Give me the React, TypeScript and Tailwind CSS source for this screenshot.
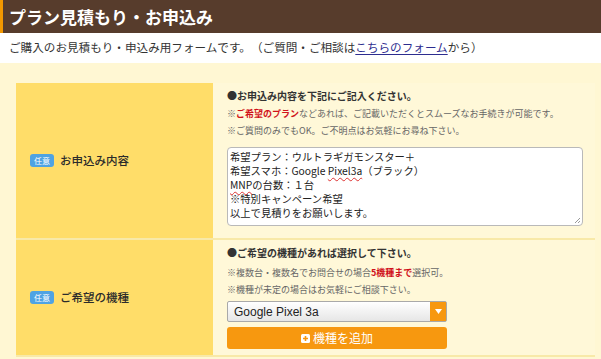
import { FC } from "react";

const jp = "font-['Noto_Sans_CJK_JP','Noto_Sans',sans-serif]";

const Badge: FC = () => (
	<span className="inline-flex h-[13px] w-[24px] items-center justify-center rounded-[3px] bg-[#4fa3e3] text-[8px] leading-none text-white">
		任意
	</span>
);

const Label: FC<{ text: string }> = ({ text }) => (
	<div className="flex w-[197px] shrink-0 items-center gap-[6px] bg-[#ffdd69] pl-[14px]">
		<Badge />
		<span className="text-[11.5px] font-medium text-[#2b2b2b]">{text}</span>
	</div>
);

const Wavy: FC<{ children: string }> = ({ children }) => (
	<span className="underline decoration-[#d33] decoration-wavy decoration-[1px] underline-offset-[2px]">
		{children}
	</span>
);

const App: FC = () => {
	return (
		<div className={`h-[359px] w-[601px] overflow-hidden bg-[#fff7d3] [text-spacing-trim:space-all] ${jp}`}>
			<div className="flex h-[33px] items-center border-l-[3px] border-[#f39800] bg-[#573c2c] pl-[6px]">
				<h1 className="text-[17px] font-bold text-white">
					プラン見積もり・お申込み
				</h1>
			</div>
			<div className="flex h-[30px] items-center bg-white pl-[9px] text-[11.6px] text-[#333]">
				ご購入のお見積もり・申込み用フォームです。（ご質問・ご相談は
				<a className="text-[#2d2d8f] underline underline-offset-[2px]">こちらのフォーム</a>
				から）
			</div>
			<div className="pl-[16px] pr-[6px] pt-[20px]">
				{/* row 1 */}
				<div className="flex h-[157px] border-b-2 border-[#f8e9a8]">
					<Label text="お申込み内容" />
					<div className="flex-1 bg-[#fff8d8] pl-[14px]">
						<p className="mt-[6px] text-[10px] font-bold leading-[14px] text-[#333]">
							●お申込み内容を下記にご記入ください。
						</p>
						<div className="mt-[2px] text-[9px] leading-[17px] text-[#666]">
							<p>
								※<span className="font-bold text-[#d0121b]">ご希望のプラン</span>
								などあれば、ご記載いただくとスムーズなお手続きが可能です。
							</p>
							<p>※ご質問のみでもOK。ご不明点はお気軽にお尋ね下さい。</p>
						</div>
						<div className="relative mt-[8px] h-[79px] w-[356px] rounded-[4px] border border-[#b9b9b9] bg-white px-[2px] pt-[2px] text-[10.3px] leading-[14px] text-[#222]">
							<p>希望プラン：ウルトラギガモンスター＋</p>
							<p>
								希望スマホ：Google <Wavy>Pixel3a</Wavy>（ブラック）
							</p>
							<p>
								<Wavy>MNP</Wavy>の台数：１台
							</p>
							<p>※特別キャンペーン希望</p>
							<p>以上で見積りをお願いします。</p>
							<svg className="absolute bottom-[1px] right-[1px]" width="8" height="8" viewBox="0 0 8 8">
								<path d="M7 2L2 7M7 5L5 7" stroke="#999" strokeWidth="1" />
							</svg>
						</div>
					</div>
				</div>
				{/* row 2 */}
				<div className="flex h-[117px] border-b-2 border-[#f8e9a8]">
					<Label text="ご希望の機種" />
					<div className="flex-1 bg-[#fff8d8] pl-[14px]">
						<p className="mt-[6px] text-[10px] font-bold leading-[14px] text-[#333]">
							●ご希望の機種があれば選択して下さい。
						</p>
						<div className="mt-[4px] text-[9px] leading-[17px] text-[#666]">
							<p>
								※複数台・複数名でお問合せの場合
								<span className="font-bold text-[#d0121b]">5機種まで</span>
								選択可。
							</p>
							<p>※機種が未定の場合はお気軽にご相談下さい。</p>
						</div>
						<div className="mt-[3px] flex h-[21px] w-[220px] items-stretch rounded-[2px] border border-[#a9a9a9] bg-gradient-to-b from-white to-[#e6e6e6]">
							<span className="flex flex-1 items-center pl-[6px] font-['Liberation_Sans',Arial,sans-serif] text-[12px] text-[#222]">
								Google Pixel 3a
							</span>
							<span className="flex w-[16px] items-center justify-center bg-[#f7980f]">
								<svg width="7" height="5" viewBox="0 0 7 5">
									<path d="M0 0H7L3.5 5Z" fill="#fff" />
								</svg>
							</span>
						</div>
						<button className="mt-[5px] flex h-[22px] w-[220px] items-center justify-center gap-[3px] rounded-[3px] bg-[#f7980f] text-[12px] text-white">
							<svg width="9" height="9" viewBox="0 0 9 9">
								<rect width="9" height="9" rx="1.5" fill="#fff" />
								<path d="M4.5 2V7M2 4.5H7" stroke="#f7980f" strokeWidth="1.6" />
							</svg>
							機種を追加
						</button>
					</div>
				</div>
			</div>
		</div>
	);
};

export default App;
